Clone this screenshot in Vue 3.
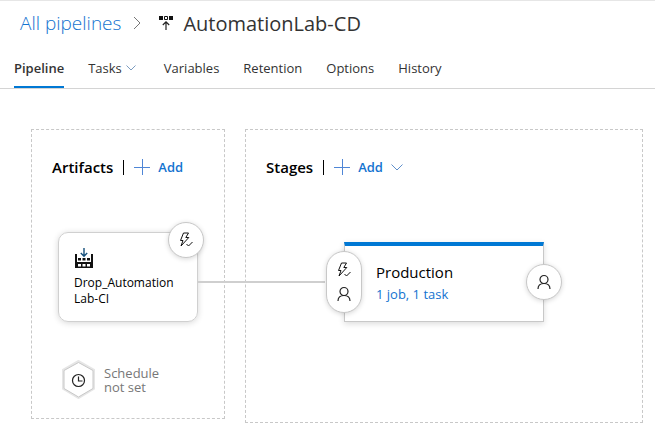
<script setup>
import { ref } from 'vue'

const tabs = ['Pipeline', 'Tasks', 'Variables', 'Retention', 'Options', 'History']
const active = ref('Pipeline')
</script>

<template>
  <div class="page">
    <header class="title-bar">
      <a class="crumb" href="#">All pipelines</a>
      <svg class="crumb-sep" width="8" height="14" viewBox="0 0 8 14" aria-hidden="true">
        <path d="M1 1l6 6-6 6" fill="none" stroke="#777" />
      </svg>
      <svg class="release-icon" width="14" height="14" viewBox="0 0 14 14" aria-hidden="true">
        <path d="M0 0h4v4H0zM10 0h4v4h-4z" fill="#111" />
        <path d="M5.500 .5h3v3h-3z" fill="none" stroke="#111" />
        <path d="M7 14V6M3.800 9L7 5.800 10.200 9" fill="none" stroke="#222" stroke-width="1.200" />
      </svg>
      <h1>AutomationLab-CD</h1>
    </header>

    <nav class="tabs">
      <button
        v-for="tab in tabs"
        :key="tab"
        type="button"
        :class="['tab', { active: tab === active }]"
        @click="active = tab"
      >
        {{ tab }}
        <svg v-if="tab === 'Tasks'" class="tab-arrow" width="10" height="6" viewBox="0 0 10 6" aria-hidden="true">
          <path d="M.5 .5L5 5 9.500 .5" fill="none" stroke="#7c9cc0" />
        </svg>
      </button>
    </nav>

    <main class="canvas">
      <section class="panel artifacts">
        <div class="panel-head">
          <h2>Artifacts</h2>
          <span class="divider"></span>
          <button type="button" class="add">
            <svg width="16" height="16" viewBox="0 0 16 16" aria-hidden="true">
              <path d="M8.500 0v16M0 8.500h16" fill="none" stroke="#4f86d6" />
            </svg>
            Add
          </button>
        </div>

        <div class="artifact">
          <span class="connector"></span>
          <svg class="build-icon" width="20" height="20" viewBox="0 0 20 20" aria-hidden="true">
            <path d="M10 0v8M6.800 5L10 8.200 13.200 5" fill="none" stroke="#16507c" stroke-width="1.400" />
            <path d="M1 6h2v8h14V6h2v14H1z" fill="#111" />
            <path d="M4 10h3v2.500H4zM8.500 10h3v2.500h-3zM13 10h3v2.500h-3z" fill="#111" />
            <path d="M4 16h3v2.500H4zM8.500 16h3v2.500h-3zM13 16h3v2.500h-3z" fill="#fff" />
          </svg>
          <p>Drop_Automation<wbr />Lab-CI</p>
          <button type="button" class="badge trigger" aria-label="Continuous deployment trigger">
            <svg width="16" height="16" viewBox="0 0 16 16" aria-hidden="true">
              <path d="M5.500 1h5L7.800 5.500h3L3 14l2-5.500H2.500zM8.500 12l2 2 4-4" fill="none" stroke="#111" stroke-linejoin="round" />
            </svg>
          </button>
        </div>

        <div class="schedule">
          <svg class="hexagon" width="33" height="39" viewBox="0 0 33 39" aria-hidden="true">
            <path d="M16.500 1.500l15 8.500v18.500l-15 9-15-9V10z" fill="#fff" stroke="#e6e6e6" stroke-width="3" />
            <path d="M16.500 2.500l14.500 8v18l-14.500 8.500L2 28.500v-18z" fill="#fff" stroke="#c8c8c8" />
            <circle cx="16.500" cy="20.500" r="6" fill="none" stroke="#222" stroke-width="1.200" />
            <path d="M16.500 16.500v4.500h4" fill="none" stroke="#222" stroke-width="1.200" />
          </svg>
          <span>Schedule<br />not set</span>
        </div>
      </section>

      <section class="panel stages">
        <div class="panel-head">
          <h2>Stages</h2>
          <span class="divider"></span>
          <button type="button" class="add">
            <svg width="16" height="16" viewBox="0 0 16 16" aria-hidden="true">
              <path d="M8.500 0v16M0 8.500h16" fill="none" stroke="#4f86d6" />
            </svg>
            Add
            <svg width="12" height="7" viewBox="0 0 12 7" aria-hidden="true">
              <path d="M.5 .5L6 6 11.500 .5" fill="none" stroke="#5f8fcb" />
            </svg>
          </button>
        </div>

        <div class="stage">
          <h3>Production</h3>
          <a href="#">1 job, 1 task</a>
          <button type="button" class="badge pre" aria-label="Pre-deployment conditions">
            <svg width="16" height="16" viewBox="0 0 16 16" aria-hidden="true">
              <path d="M5.500 1h5L7.800 5.500h3L3 14l2-5.500H2.500zM8.500 12l2 2 4-4" fill="none" stroke="#111" stroke-linejoin="round" />
            </svg>
            <svg width="16" height="16" viewBox="0 0 16 16" aria-hidden="true">
              <circle cx="8" cy="5.500" r="4" fill="none" stroke="#222" stroke-width="1.200" />
              <path d="M2 15c0-3.500 2.500-5.500 6-5.500s6 2 6 5.500" fill="none" stroke="#222" stroke-width="1.200" />
            </svg>
          </button>
          <button type="button" class="badge post" aria-label="Post-deployment conditions">
            <svg width="16" height="16" viewBox="0 0 16 16" aria-hidden="true">
              <circle cx="8" cy="5.500" r="4" fill="none" stroke="#222" stroke-width="1.200" />
              <path d="M2 15c0-3.500 2.500-5.500 6-5.500s6 2 6 5.500" fill="none" stroke="#222" stroke-width="1.200" />
            </svg>
          </button>
        </div>
      </section>
    </main>
  </div>
</template>

<style>
body {
  background: #fff;
}
</style>

<style scoped>
.page {
  font-family: "Open Sans", "Noto Sans", sans-serif;
  font-size: 13px;
  color: #333;
  border-top: 1px solid #e6e6e6;
}

h1,
h2,
h3,
p {
  margin: 0;
}

a {
  color: #1473d0;
  text-decoration: none;
}

button {
  font: inherit;
  color: inherit;
  background: none;
  border: 0;
  padding: 0;
  cursor: pointer;
}

svg {
  flex: none;
}

.title-bar {
  display: flex;
  align-items: center;
  height: 44px;
  padding: 0 20px;
}

.crumb {
  font-size: 19px;
  font-weight: 300;
}

.crumb-sep {
  margin: 0 18px 0 12px;
}

.release-icon {
  margin-right: 10px;
}

h1 {
  font-size: 20px;
  font-weight: 400;
}

.tabs {
  display: flex;
  gap: 24px;
  height: 43px;
  padding: 0 14px;
  border-bottom: 1px solid #d4d4d4;
}

.tab {
  display: flex;
  align-items: center;
  gap: 4px;
  padding-top: 4px;
  border-bottom: 2px solid transparent;
}

.tab-arrow {
  margin-right: 4px;
}

.tab.active {
  font-weight: 600;
  border-bottom-color: #0078d4;
}

.canvas {
  display: grid;
  grid-template-columns: auto 1fr;
  align-items: start;
  gap: 20px;
  padding: 40px 12px 12px 31px;
}

.panel {
  border: 1px dashed #c8c8c8;
  padding: 25px 20px 0;
}

.artifacts {
  padding-bottom: 19px;
}

.stages {
  padding-bottom: 100px;
}

.panel-head {
  display: flex;
  align-items: center;
  height: 24px;
}

h2 {
  font-size: 15px;
  font-weight: 600;
  color: #000;
}

.divider {
  width: 1px;
  height: 15px;
  margin: 0 10px;
  background: #000;
}

.add {
  display: flex;
  align-items: center;
  gap: 8px;
  font-weight: 600;
  color: #1473d0;
}

.artifact {
  position: relative;
  width: 140px;
  height: 90px;
  box-sizing: border-box;
  margin: 53px 6px 0;
  padding: 15px;
  border: 1px solid #d0d0d0;
  border-radius: 10px;
  box-shadow: 0 1px 6px rgba(0, 0, 0, 0.16);
  color: #000;
  font-size: 12px;
  line-height: 16px;
}

.build-icon {
  display: block;
  margin-bottom: 7px;
}

.connector {
  position: absolute;
  top: 48px;
  left: 100%;
  width: 128px;
  height: 2px;
  background: #cfcfcf;
}

.badge {
  position: absolute;
  display: flex;
  flex-direction: column;
  align-items: center;
  justify-content: center;
  gap: 8px;
  width: 36px;
  height: 36px;
  border: 1px solid #c8c8c8;
  border-radius: 18px;
  background: #fff;
  box-shadow: 0 1px 5px rgba(0, 0, 0, 0.16);
}

.trigger {
  top: -11px;
  right: -7px;
}

.schedule {
  display: flex;
  align-items: center;
  gap: 9px;
  margin: 38px 0 0 10px;
  line-height: 14px;
  color: #777;
}

.stage {
  position: relative;
  width: 200px;
  height: 80px;
  box-sizing: border-box;
  margin: 63px 0 0 78px;
  padding: 15px 31px;
  border: 1px solid #c8c8c8;
  border-top: 4px solid #0078d4;
  box-shadow: 0 2px 6px rgba(0, 0, 0, 0.14);
}

h3 {
  font-size: 15px;
  font-weight: 400;
  line-height: 22px;
  color: #000;
}

.stage a {
  line-height: 22px;
}

.pre {
  top: 5px;
  left: -19px;
  height: 62px;
}

.post {
  top: 18px;
  right: -19px;
}
</style>
